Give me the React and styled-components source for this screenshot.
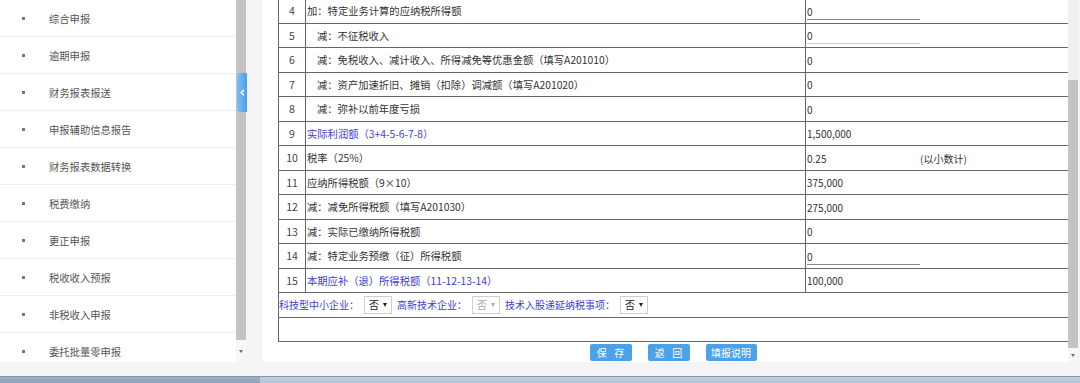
import React from 'react';
import styled, { createGlobalStyle } from 'styled-components';

const GlobalStyle = createGlobalStyle`
  html, body {
    margin: 0;
    padding: 0;
  }
  body {
    background: #f4f4f4;
    font-family: 'Noto Sans CJK SC', 'Microsoft YaHei', sans-serif;
    font-size: 10px;
    color: #333;
    overflow: hidden;
  }
`;

const Screen = styled.div`
  width: 1080px;
  height: 383px;
  display: flex;
  flex-direction: column;
`;

const Body = styled.div`
  flex: 1;
  min-height: 0;
  display: flex;
  align-items: flex-start;
`;

const Sidebar = styled.aside`
  position: relative;
  width: 246px;
  height: 362px;
  display: flex;
  background: #fff;
`;

const MenuList = styled.ul`
  flex: 1;
  margin: 0;
  padding: 0;
  list-style: none;
  overflow: hidden;
`;

const MenuItem = styled.li`
  flex-shrink: 0;
  height: 37px;
  box-sizing: border-box;
  display: flex;
  align-items: center;
  padding-left: 22px;
  border-bottom: 1px solid #ededed;
  color: #555;
  font-size: 10.3px;

  &::before {
    content: '';
    width: 3px;
    height: 3px;
    background: #777;
    margin-right: 24px;
  }
`;

const ScrollBar = styled.div`
  width: 10px;
  height: 100%;
  display: flex;
  flex-direction: column;
  background: #f7f7f7;
`;

const Track = styled.div`
  height: ${(p) => p.$h}px;
  background: #f0f0f0;
`;

const Thumb = styled.div`
  height: ${(p) => p.$h}px;
  background: #c3c3c3;
`;

const ArrowZone = styled.div`
  flex: 1;
  display: flex;
  align-items: center;
  justify-content: center;

  &::after {
    content: '';
    border-left: 2.5px solid transparent;
    border-right: 2.5px solid transparent;
    border-top: 3px solid #6f6f6f;
  }
`;

const CollapseTab = styled.div`
  position: absolute;
  left: 237px;
  top: 73px;
  width: 10px;
  height: 39px;
  border-radius: 4px 0 0 4px;
  background: linear-gradient(to right, #7cc0f6, #4b9fe6);
  display: flex;
  align-items: center;
  justify-content: center;
`;

const Panel = styled.main`
  margin-left: 16px;
  width: 816px;
  height: 362px;
  display: flex;
  background: #fff;
  border-radius: 0 0 4px 4px;
`;

const PanelContent = styled.div`
  flex: 1;
  min-width: 0;
  display: flex;
  flex-direction: column;
  justify-content: flex-end;
  overflow: hidden;
  padding: 0 1px 1px 16px;
`;

const FormTable = styled.table`
  flex-shrink: 0;
  width: 790px;
  border-collapse: collapse;
  table-layout: fixed;
  border: 1px solid #666;
`;

const Row = styled.tr`
  height: 24.5px;
`;

const Cell = styled.td`
  border: 1px solid #666;
  padding: 0;
  white-space: nowrap;
  vertical-align: middle;
`;

const IndexCell = styled(Cell)`
  text-align: center;
  font-size: 10.5px;
  color: #444;
`;

const LabelCell = styled(Cell)`
  padding-left: ${(p) => (p.$indent ? 11 : 1)}px;
  font-size: 10.3px;
  color: ${(p) => (p.$blue ? '#3d3dd6' : '#333')};
`;

const ValueCell = styled(Cell)`
  padding-left: 1px;
`;

const ValueText = styled.span`
  display: inline-block;
  width: 113px;
  height: 17px;
  line-height: 17px;
  box-sizing: border-box;
  border-bottom: 1px solid ${(p) => p.$line || 'transparent'};
  vertical-align: middle;
`;

const Note = styled.span`
  vertical-align: middle;
`;

const OptionBar = styled.div`
  display: flex;
  align-items: center;
  gap: 4px;
  color: #3d3dd6;
`;

const FakeSelect = styled.span`
  display: inline-flex;
  align-items: center;
  gap: 4px;
  height: 18px;
  box-sizing: border-box;
  padding: 0 4px;
  margin: 0 1px;
  border: 1px solid #cfcfcf;
  background: #fff;
  color: ${(p) => (p.$disabled ? '#a8a8a8' : '#222')};

  &::after {
    content: '';
    border-left: 2.5px solid transparent;
    border-right: 2.5px solid transparent;
    border-top: 4px solid ${(p) => (p.$disabled ? '#aaa' : '#222')};
  }
`;

const ButtonBar = styled.div`
  flex-shrink: 0;
  display: flex;
  justify-content: center;
  gap: 16px;
  margin-top: 2px;
  width: 790px;
`;

const ActionButton = styled.button`
  width: ${(p) => p.$w}px;
  height: 17px;
  padding: 0;
  border: none;
  border-radius: 2px;
  background: #4ba2e7;
  color: #fff;
  font-family: inherit;
  font-size: 10px;
  white-space: nowrap;
  display: flex;
  align-items: center;
  justify-content: ${(p) => (p.$spread ? 'space-evenly' : 'center')};
`;

const Footer = styled.div`
  height: 6px;
  display: flex;
  border-top: 1px solid #8196ad;
`;

const FooterLeft = styled.div`
  width: 260px;
  background: linear-gradient(#9db0c4, #8ea3b9);
`;

const FooterRest = styled.div`
  flex: 1;
  background: linear-gradient(#c3d2e3, #b3c4d8);
`;

const menu = [
  '综合申报',
  '逾期申报',
  '财务报表报送',
  '申报辅助信息报告',
  '财务报表数据转换',
  '税费缴纳',
  '更正申报',
  '税收收入预报',
  '非税收入申报',
  '委托批量零申报',
];

const rows = [
  { n: 4, label: '加：特定业务计算的应纳税所得额', value: '0', line: '#8a8a8a' },
  { n: 5, label: '减：不征税收入', value: '0', indent: true, line: '#cfcfcf' },
  { n: 6, label: '减：免税收入、减计收入、所得减免等优惠金额（填写A201010）', value: '0', indent: true },
  { n: 7, label: '减：资产加速折旧、摊销（扣除）调减额（填写A201020）', value: '0', indent: true },
  { n: 8, label: '减：弥补以前年度亏损', value: '0', indent: true },
  { n: 9, label: '实际利润额（3+4-5-6-7-8）', value: '1,500,000', blue: true },
  { n: 10, label: '税率（25%）', value: '0.25', note: '(以小数计)' },
  { n: 11, label: '应纳所得税额（9×10）', value: '375,000' },
  { n: 12, label: '减：减免所得税额（填写A201030）', value: '275,000' },
  { n: 13, label: '减：实际已缴纳所得税额', value: '0' },
  { n: 14, label: '减：特定业务预缴（征）所得税额', value: '0', line: '#8a8a8a' },
  { n: 15, label: '本期应补（退）所得税额（11-12-13-14）', value: '100,000', blue: true },
];

function Chevron() {
  return (
    <svg width="5" height="7" viewBox="0 0 5 7">
      <path d="M4 0.8 L1.2 3.5 L4 6.2" fill="none" stroke="#fff" strokeWidth="1.4" />
    </svg>
  );
}

export default function App() {
  return (
    <>
      <GlobalStyle />
      <Screen>
        <Body>
          <Sidebar>
            <MenuList>
              {menu.map((m) => (
                <MenuItem key={m}>{m}</MenuItem>
              ))}
            </MenuList>
            <ScrollBar>
              <Thumb $h={340} />
              <ArrowZone />
            </ScrollBar>
            <CollapseTab>
              <Chevron />
            </CollapseTab>
          </Sidebar>

          <Panel>
            <PanelContent>
              <FormTable>
                <colgroup>
                  <col style={{ width: 27 }} />
                  <col style={{ width: 500 }} />
                  <col style={{ width: 263 }} />
                </colgroup>
                <tbody>
                  {rows.map((r) => (
                    <Row key={r.n}>
                      <IndexCell>{r.n}</IndexCell>
                      <LabelCell $indent={r.indent} $blue={r.blue}>
                        {r.label}
                      </LabelCell>
                      <ValueCell>
                        <ValueText $line={r.line}>{r.value}</ValueText>
                        {r.note && <Note>{r.note}</Note>}
                      </ValueCell>
                    </Row>
                  ))}
                  <Row>
                    <Cell colSpan={3}>
                      <OptionBar>
                        <span>科技型中小企业：</span>
                        <FakeSelect>否</FakeSelect>
                        <span>高新技术企业：</span>
                        <FakeSelect $disabled>否</FakeSelect>
                        <span>技术入股递延纳税事项：</span>
                        <FakeSelect>否</FakeSelect>
                      </OptionBar>
                    </Cell>
                  </Row>
                  <Row>
                    <Cell colSpan={3} />
                  </Row>
                </tbody>
              </FormTable>
              <ButtonBar>
                <ActionButton $w={42} $spread>
                  <span>保</span>
                  <span>存</span>
                </ActionButton>
                <ActionButton $w={42} $spread>
                  <span>返</span>
                  <span>回</span>
                </ActionButton>
                <ActionButton $w={51}>填报说明</ActionButton>
              </ButtonBar>
            </PanelContent>
            <ScrollBar>
              <Track $h={80} />
              <Thumb $h={268} />
              <ArrowZone />
            </ScrollBar>
          </Panel>
        </Body>
        <Footer>
          <FooterLeft />
          <FooterRest />
        </Footer>
      </Screen>
    </>
  );
}
